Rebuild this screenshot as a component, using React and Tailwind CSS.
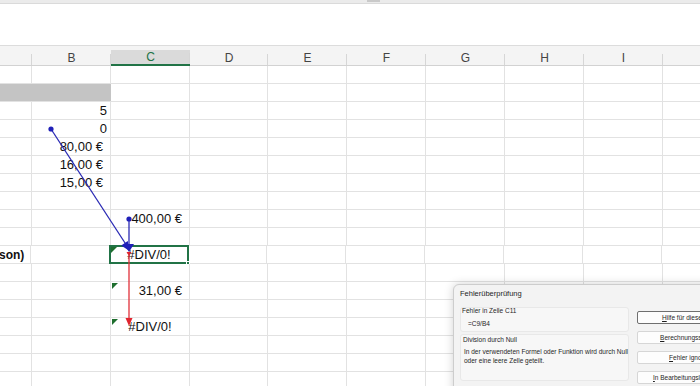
const cols = [
  { key: "A", cls: "w-[32px]" },
  { key: "B", cls: "w-[79px]" },
  { key: "C", cls: "w-[79px]" },
  { key: "D", cls: "w-[78px]" },
  { key: "E", cls: "w-[79px]" },
  { key: "F", cls: "w-[79px]" },
  { key: "G", cls: "w-[79px]" },
  { key: "H", cls: "w-[79px]" },
  { key: "I", cls: "w-[79px]" },
  { key: "J", cls: "w-[79px]" },
];

// row index -> cell contents
const data = {
  1: { A: { bar: true }, B: { bar: true } },
  2: { B: { text: "5", align: "num" } },
  3: { B: { text: "0", align: "num" } },
  4: { B: { text: "80,00 €", align: "cur" } },
  5: { B: { text: "16,00 €", align: "cur" } },
  6: { B: { text: "15,00 €", align: "cur" } },
  8: { C: { text: "400,00 €", align: "cur" } },
  10: {
    A: { text: "son)", align: "bold" },
    C: { text: "#DIV/0!", align: "err", flag: true, selected: true },
  },
  12: { C: { text: "31,00 €", align: "cur", flag: true } },
  14: { C: { text: "#DIV/0!", align: "err", flag: true } },
};

const alignCls = {
  num: "justify-end pr-[3px]",
  cur: "justify-end pr-[7px]",
  err: "justify-center",
  bold: "justify-start -ml-[1px] font-bold text-[12px]",
};

function Cell({ col, cell }) {
  const bar = cell?.bar;
  return (
    <div
      className={`${col.cls} shrink-0 h-full relative flex items-center border-r ${
        bar ? "bg-[#c4c4c4] border-[#c4c4c4]" : "border-[#e2e2e2]"
      } ${cell?.align ? alignCls[cell.align] : ""}`}
    >
      {cell?.flag && (
        <svg className="absolute left-[1px] top-[1px]" width="7" height="7" viewBox="0 0 7 7">
          <polygon points="0,0 6,0 0,6" fill="#1e6e2e" />
        </svg>
      )}
      {cell?.text && <span className="whitespace-nowrap leading-none">{cell.text}</span>}
      {cell?.selected && (
        <div className="absolute -left-[1px] -top-[1px] -right-[1px] -bottom-[1px] border-2 border-[#217346]">
          <div className="absolute -right-[3px] -bottom-[3px] w-[4px] h-[4px] bg-[#217346] border border-white" />
        </div>
      )}
    </div>
  );
}

function Arrows() {
  return (
    <svg className="absolute left-0 top-0 pointer-events-none" width="700" height="386">
      {/* blue precedent arrows */}
      <line x1="51" y1="129" x2="127" y2="246" stroke="#2a2ab4" strokeWidth="1.3" />
      <circle cx="51" cy="129" r="2.6" fill="#2020b8" />
      <polygon points="121.2,245.5 127.8,241 129.5,251" fill="#2020b8" />
      <line x1="129" y1="219" x2="129" y2="246" stroke="#2a2ab4" strokeWidth="1.3" />
      <circle cx="129" cy="219" r="2.6" fill="#2020b8" />
      <polygon points="124,244 134,244 129,252" fill="#2020b8" />
      {/* red error arrow */}
      <polygon points="126.5,252 131.5,252 129,256" fill="#e0242e" />
      <line x1="129" y1="254" x2="129" y2="320" stroke="#e0303a" strokeWidth="1.3" />
      <polygon points="125.5,318 132.5,318 129,326" fill="#e0242e" />
    </svg>
  );
}

const buttons = [
  { u: "H", rest: "ilfe für diesen Fehler", focus: true, pad: "pl-[24px]" },
  { u: "B", rest: "erechnungsschritte anzeigen...", pad: "pl-[22px]" },
  { u: "F", rest: "ehler ignorieren", pad: "pl-[31px]" },
  { u: "I", rest: "n Bearbeitungsleiste bearbeiten", pad: "pl-[15px]" },
];

function ErrorDialog() {
  return (
    <div className="absolute left-[453px] top-[284px] w-[290px] h-[120px] bg-[#f3f3f3] border border-[#cdcdcd] rounded-tl-[6px] shadow-[0_0_10px_rgba(0,0,0,0.18)] text-[#1f1f1f]">
      <div className="h-[18px] pl-[6px] flex items-center text-[7.5px]">Fehlerüberprüfung</div>
      <div className="flex pl-[6px] pt-[4px] gap-[8px]">
        <div className="w-[176px] flex flex-col gap-[2px] text-[6.5px]">
          <div className="h-[25px] bg-[#f7f7f7] border border-[#e8e8e8] rounded-[3px] pl-[1px]">
            <div className="h-[8px] leading-[8px] -mt-px">Fehler in Zelle C11</div>
            <div className="h-[8px] leading-[8px] mt-[5px] pl-[6px]">=C9/B4</div>
          </div>
          <div className="h-[47px] bg-[#f7f7f7] border border-[#e8e8e8] rounded-[3px] pl-[2px]">
            <div className="h-[8px] leading-[8px] mt-px">Division durch Null</div>
            <div className="mt-[3px] leading-[9px] whitespace-nowrap pl-[1px]">
              In der verwendeten Formel oder Funktion wird durch Null
              <br />
              oder eine leere Zelle geteilt.
            </div>
          </div>
        </div>
        <div className="flex flex-col gap-[7px] mt-[4px]">
          {buttons.map((b) => (
            <div
              key={b.u}
              className={`w-[126px] h-[13px] flex items-center overflow-hidden whitespace-nowrap text-[6.5px] bg-[#fdfdfd] rounded-[2px] border ${b.pad} ${
                b.focus ? "border-[#6f6f6f]" : "border-[#d6d6d6]"
              }`}
            >
              <span>
                <span className="underline">{b.u}</span>
                {b.rest}
              </span>
            </div>
          ))}
        </div>
      </div>
    </div>
  );
}

export default function App() {
  const rows = Array.from({ length: 18 }, (_, i) => i);
  return (
    <div className="relative w-[700px] h-[386px] overflow-hidden bg-white font-['Liberation_Sans',Arial,sans-serif] text-[13px] text-[#111]">
      {/* window chrome strip */}
      <div className="h-[4px] bg-[#ebebeb] border-b border-[#dadada] flex">
        <div className="ml-[367px] w-[13px] h-[2px] bg-[#c9c9c9]" />
      </div>
      <div className="h-[41px] bg-white" />

      {/* column headers */}
      <div className="h-[21px] border-t border-[#dcdcdc] bg-[#f4f4f4]">
        <div className="mt-[4px] h-[16px] flex">
          {cols.map((c) => (
            <div
              key={c.key}
              className={`${c.cls} shrink-0 h-full relative flex items-center justify-center text-[12px] ${
                c.key === "C"
                  ? "bg-[#dadada] text-[#217346] border-b-2 border-[#217346]"
                  : "text-[#444] border-b border-[#d2d2d2]"
              }`}
            >
              {c.key !== "A" && c.key !== "J" && c.key}
              <span className="absolute right-0 bottom-0 w-px h-[11px] bg-[#d6d6d6]" />
            </div>
          ))}
        </div>
      </div>

      {/* grid */}
      <div className="flex flex-col">
        {rows.map((r) => (
          <div key={r} className="h-[18px] flex border-b border-[#e2e2e2]">
            {cols.map((c) => (
              <Cell key={c.key} col={c} cell={data[r]?.[c.key]} />
            ))}
          </div>
        ))}
      </div>

      <Arrows />
      <ErrorDialog />
    </div>
  );
}
